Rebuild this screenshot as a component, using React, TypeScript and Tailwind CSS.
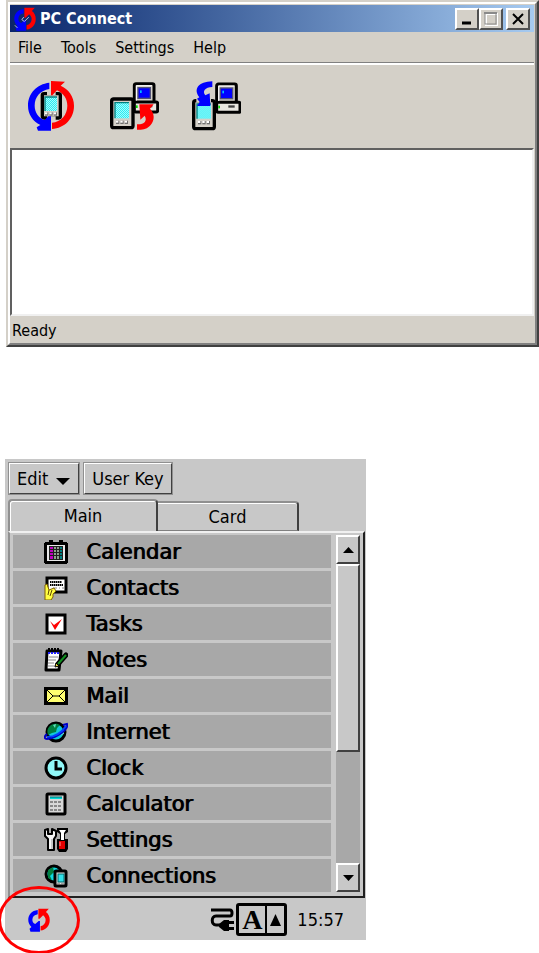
import React, { useState } from 'react';

interface MenuEntry {
  label: string;
  icon: React.ReactNode;
}

// Small two-arrow logo, used in the title bar and in the tray
const SyncIcon: React.FC<{ children?: React.ReactNode }> = ({ children }) => (
  <svg className="size-6 shrink-0" viewBox="80 368 72 76" aria-hidden="true">
    <path d="M112 374 C93 376 82 389 82 405 C82 414 85 421 92 428 L86 434 L89 443 H119 V409 H115 L104 419 C97 415 95 411 95 405 C95 396 101 390 112 388 Z" fill="#0000ff" />
    <path d="M114 370 H147 L138 381 C146 387 150 396 150 406 C150 425 138 438 121 439 V426 C131 424 137 416 137 406 C137 400 134 395 129 391 L118 402 H114 Z" fill="#ff0000" />
    {children}
  </svg>
);

const Screen: React.FC<{ x: number; y: number; w: number; h: number }> = ({ x, y, w, h }) => (
  <>
    <rect x={x} y={y} width={w} height={h} fill="url(#dither)" />
    <path d={`M${x} ${y + h} V${y} H${x + w}`} fill="none" stroke="#008080" strokeWidth="4" />
  </>
);

const Dither: React.FC = () => (
  <defs>
    <pattern id="dither" width="6" height="6" patternUnits="userSpaceOnUse">
      <rect width="6" height="6" fill="#a0ffff" />
      <rect width="3" height="3" fill="#30e8f0" />
      <rect x="3" y="3" width="3" height="3" fill="#30e8f0" />
    </pattern>
  </defs>
);

const Keys: React.FC<{ x: number; y: number }> = ({ x, y }) => (
  <>
    {[0, 13, 26].map((dx) => (
      <g key={dx}>
        <rect x={x + dx} y={y} width="10" height="10" fill="#707070" />
        <rect x={x + dx} y={y} width="7" height="6" fill="#fff" />
      </g>
    ))}
  </>
);

// Desktop computer, drawn with its top left corner at 0,0
const Computer: React.FC = () => (
  <>
    <rect x="4" y="4" width="59" height="60" rx="5" fill="#d4d0c8" stroke="#000" strokeWidth="9" />
    <rect x="4" y="59" width="70" height="30" rx="4" fill="#e8e6e0" stroke="#000" strokeWidth="9" />
    <path d="M10 55 V10 H57" fill="none" stroke="#fff" strokeWidth="3" />
    <rect x="13" y="14" width="41" height="36" fill="#505078" />
    <rect x="17" y="18" width="33" height="28" fill="#0000ff" />
    <rect x="21" y="24" width="5" height="8" fill="#00c0ff" />
    <rect x="9" y="69" width="5" height="8" fill="#00e000" />
    <rect x="39" y="68" width="19" height="7" fill="#404040" />
  </>
);

const SyncDeviceIcon: React.FC = () => (
  <svg className="h-[50px] w-[46px]" viewBox="24 18 138 150" aria-hidden="true">
    <Dither />
    <rect x="67" y="56" width="54" height="73" rx="5" fill="#d4d0c8" stroke="#000" strokeWidth="10" />
    <path d="M81 55 H107 M81 130 H107" stroke="#d4d0c8" strokeWidth="12" />
    <Screen x={75} y={66} w={36} h={42} />
    <Keys x={75} y={112} />
    <path d="M88 23 C50 27 24 56 24 92 C24 118 39 139 61 150 L50 157 L54 167 L93 167 L93 124 L85 124 L74 135 C56 129 44 112 44 92 C44 66 61 46 88 42 Z" fill="#0000ff" />
    <path d="M93 18 L135 20 L122 32 C145 42 162 64 162 92 C162 131 134 159 96 162 L96 143 C123 141 142 119 142 92 C142 72 131 55 111 46 L97 61 L93 61 Z" fill="#ff0000" />
  </svg>
);

const ToPcIcon: React.FC = () => (
  <svg className="h-[49px] w-[49px]" viewBox="27 24 147 147" aria-hidden="true">
    <g transform="translate(96 28)">
      <Computer />
    </g>
    <rect x="32" y="78" width="64" height="86" rx="6" fill="#d4d0c8" stroke="#000" strokeWidth="10" />
    <Screen x={42} y={89} w={42} h={47} />
    <Keys x={45} y={143} />
    <path d="M115 94 L158 94 L147 107 C162 122 161 142 149 156 C138 169 124 171 108 170 L108 154 C130 155 140 143 131 128 L118 140 Z" fill="#ff0000" />
  </svg>
);

const FromPcIcon: React.FC = () => (
  <svg className="h-[50px] w-[49px]" viewBox="35 17 147 150" aria-hidden="true">
    <g transform="translate(105 22)">
      <Computer />
    </g>
    <rect x="40" y="76" width="62" height="84" rx="6" fill="#d4d0c8" stroke="#000" strokeWidth="10" />
    <path d="M48 74 H92" stroke="#d4d0c8" strokeWidth="14" />
    <Screen x={50} y={86} w={42} h={44} />
    <Keys x={53} y={137} />
    <path d="M96 18 L96 35 C74 36 65 47 75 60 L88 54 L90 92 L50 92 L58 80 L50 70 L57 66 C38 42 54 19 96 18 Z" fill="#0000ff" />
  </svg>
);

const CalendarIcon: React.FC = () => (
  <svg className="size-6" viewBox="0 0 24 24" shapeRendering="crispEdges" aria-hidden="true">
    <path d="M1 2 H5 V0 H9 V2 H15 V0 H19 V2 H23 V3 H24 V23 H23 V24 H1 V23 H0 V3 H1 Z" fill="#000" />
    <rect x="3" y="5" width="18" height="16" fill="#e8e8e8" />
    <rect x="5" y="6" width="14" height="14" fill="#202020" />
    <path d="M6 7 H9 V19 H6 Z" fill="#c000c0" />
    <path d="M10 7 H12 V19 H10 Z M13 7 H15 V19 H13 Z" fill="#90a090" />
    <path d="M16 7 H18 V19 H16 Z" fill="#008080" />
    <path d="M5 9 H19 V10 H5 Z M5 12 H19 V13 H5 Z M5 15 H19 V16 H5 Z" fill="#202020" />
  </svg>
);

const ContactsIcon: React.FC = () => (
  <svg className="size-6" viewBox="0 0 24 24" aria-hidden="true">
    <rect x="3" y="2" width="19" height="14" fill="#fff" stroke="#000" strokeWidth="3" />
    <path d="M6 6 H18 M6 9 H19" fill="none" stroke="#000" strokeWidth="2" strokeDasharray="1 1" />
    <path d="M6 6 H18 M6 9 H19" fill="none" stroke="#000" />
    <path d="M9 12 H13 M15 12 H16 M18 12 H20" stroke="#888" />
    <path d="M1 9 L3 8 L5 14 L10 12 L12 15 L9 18 L9 21 L7 24 L1 24 Z" fill="#ffff40" stroke="#806000" />
    <path d="M5 14 L4 19 M8 14 L6 20" stroke="#604800" />
  </svg>
);

const TasksIcon: React.FC = () => (
  <svg className="size-6" viewBox="0 0 24 24" aria-hidden="true">
    <rect x="3" y="3" width="18" height="18" fill="#fff" stroke="#000" strokeWidth="3" />
    <path d="M6 9 L10 13 L18 7 L11 18 Z" fill="#ff0000" />
  </svg>
);

const NotesIcon: React.FC = () => (
  <svg className="size-6" viewBox="0 0 24 24" aria-hidden="true">
    <path d="M3 3 H17 L15 22 H2 Z" fill="#fff" stroke="#000" strokeWidth="3" strokeLinejoin="round" />
    <path d="M5 0 V4 M8 0 V4 M11 0 V4 M14 0 V4" stroke="#000" strokeWidth="2" />
    <path d="M4 5 H15" stroke="#2020ff" strokeWidth="2" strokeDasharray="2 1" />
    <path d="M5 9 H14 M4 12 H12 M4 15 H10 M4 18 H13" stroke="#888" />
    <path d="M22 7 L14 16" stroke="#000" strokeWidth="5" strokeLinecap="round" />
    <path d="M22 7 L14 16" stroke="#109020" strokeWidth="2" />
    <path d="M11 19 L12 15 L15 18 Z" fill="#f0e040" stroke="#000" />
  </svg>
);

const MailIcon: React.FC = () => (
  <svg className="size-6" viewBox="0 0 24 24" aria-hidden="true">
    <rect x="0" y="3" width="24" height="18" fill="#000" />
    <rect x="3" y="6" width="18" height="12" fill="#ffff70" />
    <path d="M3 6 L9 12 H15 L21 6 M3 18 L9 12 M15 12 L21 18" fill="none" stroke="#000" />
  </svg>
);

const InternetIcon: React.FC = () => (
  <svg className="size-6" viewBox="0 0 24 24" aria-hidden="true">
    <circle cx="12" cy="12" r="9" fill="#10c8d8" stroke="#000" strokeWidth="3" />
    <path d="M5 7 C8 3 13 3 16 5 L13 8 L12 12 L8 13 L4 15 C3 12 3 9 5 7 Z" fill="#008040" />
    <path d="M9 5 L12 4 L11 8 Z M17 11 L20 9 V14 L17 15 Z" fill="#60e0c0" />
    <path d="M19 5 L23 4 C25 9 13 18 3 19 C0 19 0 16 3 14" fill="none" stroke="#0000c8" strokeWidth="2" />
    <path d="M3 17 C11 17 18 12 22 6" fill="none" stroke="#0040ff" strokeWidth="2" />
  </svg>
);

const ClockIcon: React.FC = () => (
  <svg className="size-6" viewBox="0 0 24 24" aria-hidden="true">
    <circle cx="12" cy="12" r="10" fill="#90f8f8" stroke="#000" strokeWidth="3" />
    <path d="M12 5 V13 H18" fill="none" stroke="#000" strokeWidth="3" />
  </svg>
);

const CalculatorIcon: React.FC = () => (
  <svg className="size-6" viewBox="0 0 24 24" aria-hidden="true">
    <rect x="3" y="2" width="18" height="20" rx="1" fill="#d8d8d8" stroke="#000" strokeWidth="3" />
    <rect x="6" y="5" width="12" height="2" fill="#00d8d8" />
    <path d="M6 5 H18" stroke="#006868" />
    <path d="M6 10 H18 M6 14 H18 M6 18 H18" stroke="#888" strokeWidth="2" strokeDasharray="3 1" />
  </svg>
);

const SettingsIcon: React.FC = () => (
  <svg className="size-6" viewBox="0 0 24 24" aria-hidden="true">
    <path d="M1 2 L4 1 V6 H8 V1 L12 3 V8 L10 11 V22 L4 22 V11 L1 8 Z" fill="#f4f4f4" stroke="#000" strokeWidth="2" strokeLinejoin="round" />
    <path d="M8 11 V21" stroke="#999" />
    <path d="M13 0 H24 V4 L21 6 V11 H24 V21 L22 24 H15 L13 21 V11 H16 V6 L13 4 Z" fill="#000" />
    <path d="M15 2 H22 L20 5 V12 H17 V5 Z" fill="#fff" />
    <rect x="15" y="13" width="6" height="8" fill="#e00000" />
    <path d="M16 14 V18" stroke="#ff9090" />
  </svg>
);

const ConnectionsIcon: React.FC = () => (
  <svg className="size-6" viewBox="0 0 24 24" aria-hidden="true">
    <circle cx="10" cy="10" r="8" fill="#10d8e0" stroke="#000" strokeWidth="3" />
    <path d="M4 6 L9 3 L10 8 L6 12 L8 16 L4 14 Z" fill="#008040" />
    <rect x="11" y="7" width="11" height="15" rx="1" fill="#e4e4e4" stroke="#000" strokeWidth="3" />
    <rect x="14" y="10" width="6" height="8" fill="#30e0e8" stroke="#006868" />
    <path d="M13 20 H16 M17 20 H20" stroke="#666" />
  </svg>
);

const PlugIcon: React.FC = () => (
  <svg className="size-6" viewBox="0 0 24 24" aria-hidden="true">
    <path d="M1 2 H20 Q22 2 22 5 Q22 8 20 8 H6 C1 8 1 17 6 17 H10" fill="none" stroke="#000" strokeWidth="3" />
    <path d="M9 16 L14 12 H19 V23 H14 L9 19 Z M18 13 H24 V16 H18 Z M18 19 H24 V22 H18 Z" fill="#000" />
  </svg>
);

const entries: MenuEntry[] = [
  { label: 'Calendar', icon: <CalendarIcon /> },
  { label: 'Contacts', icon: <ContactsIcon /> },
  { label: 'Tasks', icon: <TasksIcon /> },
  { label: 'Notes', icon: <NotesIcon /> },
  { label: 'Mail', icon: <MailIcon /> },
  { label: 'Internet', icon: <InternetIcon /> },
  { label: 'Clock', icon: <ClockIcon /> },
  { label: 'Calculator', icon: <CalculatorIcon /> },
  { label: 'Settings', icon: <SettingsIcon /> },
  { label: 'Connections', icon: <ConnectionsIcon /> },
];

const captionButton =
  'flex h-[22px] w-6 items-center justify-center border-2 border-t-white border-l-white border-r-[#505050] border-b-[#505050] bg-[#d4d0c8]';

const PcConnectWindow: React.FC = () => (
  <section className="border-2 border-t-[#d4d0c8] border-l-[#d4d0c8] border-r-[#404040] border-b-[#404040] bg-[#d4d0c8]">
    <div className="border-2 border-t-white border-l-white border-r-[#808080] border-b-[#808080] pt-px pr-px">
      <header className="flex h-[27px] items-center bg-linear-to-r from-[#0a246a] to-[#a6caf0] pr-1 pl-[3px]">
        <SyncIcon>
          <path d="M84 426 L92 434 M106 408 L114 414 L128 400 M106 408 L112 400" fill="none" stroke="#c0c8e0" strokeWidth="3" />
        </SyncIcon>
        <h1 className="ml-[3px] flex-1 text-[16px] leading-5 font-bold text-white">PC Connect</h1>
        <button type="button" className={captionButton} aria-label="Minimize">
          <svg className="h-3 w-3" viewBox="0 0 12 12">
            <path d="M1 10 H10" stroke="#000" strokeWidth="3" />
          </svg>
        </button>
        <button type="button" className={captionButton} aria-label="Maximize" disabled>
          <svg className="size-[14px]" viewBox="0 0 14 14">
            <rect x="2" y="2" width="12" height="12" fill="none" stroke="#fff" strokeWidth="2" />
            <rect x="1" y="1" width="11" height="11" fill="none" stroke="#8a8a8a" />
            <path d="M0 1 H13" stroke="#8a8a8a" strokeWidth="2" />
          </svg>
        </button>
        <button type="button" className={`${captionButton} ml-[3px]`} aria-label="Close">
          <svg className="size-3" viewBox="0 0 12 12">
            <path d="M1 1 L11 11 M11 1 L1 11" stroke="#000" strokeWidth="2" />
          </svg>
        </button>
      </header>

      <nav className="flex h-[30px] items-center gap-[19px] px-2 pt-px text-[16px] leading-5">
        {['File', 'Tools', 'Settings', 'Help'].map((item) => (
          <button key={item} type="button">{item}</button>
        ))}
      </nav>

      <div className="flex h-[86px] items-center gap-8 border-t border-[#808080] px-[18px] shadow-[inset_0_2px_0_#fff]">
        <button type="button" className="w-[50px]" aria-label="Synchronize"><SyncDeviceIcon /></button>
        <button type="button" className="w-[50px]" aria-label="Copy to PC"><ToPcIcon /></button>
        <button type="button" className="w-[50px]" aria-label="Copy to device"><FromPcIcon /></button>
      </div>

      <textarea
        readOnly
        aria-label="Log"
        className="block h-[168px] w-full resize-none border-2 border-t-[#606060] border-l-[#606060] border-r-[#f0f0f0] border-b-[#f0f0f0] bg-white outline-none"
      />
      <p className="px-[2px] pt-[5px] pb-[2px] text-[16px] leading-5">Ready</p>
    </div>
  </section>
);

const deviceButton =
  'h-[33px] border-2 border-t-white border-l-white border-r-[#404040] border-b-[#404040] outline outline-[#909090] -outline-offset-1';

const scrollButton =
  'flex h-[29px] items-center justify-center border-2 border-t-white border-l-white border-r-[#404040] border-b-[#404040] bg-[#c8c8c8]';

const DeviceScreen: React.FC = () => {
  const [tab, setTab] = useState('Main');

  return (
    <section className="w-full max-w-[361px] bg-[#c8c8c8] pt-[3px]">
      <div className="flex gap-[3px] px-[3px] text-[18px] leading-6">
        <button type="button" className={`${deviceButton} flex w-[72px] items-center gap-2 pl-[7px]`}>
          Edit
          <svg className="mt-1 h-2 w-[14px]" viewBox="0 0 14 8">
            <path d="M0 1 H14 L7 8 Z" fill="#000" />
          </svg>
        </button>
        <button type="button" className={`${deviceButton} w-[90px]`}>User Key</button>
      </div>

      <div role="tablist" className="flex items-end px-[3px] pt-1 text-[18px] leading-6">
        {['Main', 'Card'].map((name) => (
          <button
            key={name}
            type="button"
            role="tab"
            aria-selected={tab === name}
            onClick={() => setTab(name)}
            className={
              tab === name
                ? 'h-8 w-[150px] rounded-t-[4px] border-2 border-b-0 border-t-[#909090] border-l-[#909090] border-r-[#404040] shadow-[inset_1px_1px_0_#fff]'
                : 'h-[30px] w-[141px] rounded-tr-[4px] border-t-2 border-r-2 border-b border-t-[#909090] border-r-[#404040] border-b-[#808080] shadow-[inset_0_1px_0_#fff]'
            }
          >
            {name}
          </button>
        ))}
      </div>

      <div className="mr-px ml-[3px] flex gap-[5px] border-2 border-t-[#f0f0f0] border-l-[#909090] border-r-[#202020] border-b-[#202020] pt-[2px] pr-[3px] pb-1 pl-[3px]">
        <ul className="flex flex-1 flex-col gap-[3px]">
          {entries.map((entry) => (
            <li key={entry.label}>
              {/* the device fakes bold by striking the text twice */}
              <button type="button" className="flex h-[33px] w-full items-center gap-[18px] bg-[#a8a8a8] pl-[31px] font-['DejaVu_Sans',sans-serif] text-[21px] leading-6 [text-shadow:1px_0_0_#000]">
                {entry.icon}
                {entry.label}
              </button>
            </li>
          ))}
        </ul>
        <div className="flex w-6 flex-col bg-[#a8a8a8]">
          <button type="button" className={scrollButton} aria-label="Scroll up">
            <svg className="h-[6px] w-[11px]" viewBox="0 0 11 6"><path d="M5.500 0 L11 6 H0 Z" /></svg>
          </button>
          <div className="h-[188px] border-2 border-t-white border-l-white border-r-[#404040] border-b-[#404040] bg-[#c8c8c8]" />
          <button type="button" className={`${scrollButton} mt-auto`} aria-label="Scroll down">
            <svg className="h-[6px] w-[11px]" viewBox="0 0 11 6"><path d="M0 0 H11 L5.500 6 Z" /></svg>
          </button>
        </div>
      </div>

      <footer className="flex h-[42px] items-center px-[22px] pt-px">
        <div className="relative mr-auto">
          <SyncIcon />
          <div className="absolute top-1/2 left-1/2 h-[68px] w-[82px] -translate-x-1/2 -translate-y-1/2 rounded-[50%] border-[3px] border-[#ff0000]" />
        </div>
        <PlugIcon />
        <div className="ml-[2px] flex h-[33px] w-[51px] rounded-[3px] border-[3px] border-black">
          <button type="button" className="flex-1 border-r-2 border-black font-['Liberation_Serif',serif] text-[28px] leading-7 font-bold">A</button>
          <button type="button" className="flex w-[17px] items-center justify-center" aria-label="Input methods">
            <svg className="h-3 w-[11px]" viewBox="0 0 11 12"><path d="M5.500 0 L11 12 H0 Z" /></svg>
          </button>
        </div>
        <time className="ml-[10px] text-[18px] leading-6">15:57</time>
      </footer>
    </section>
  );
};

const App: React.FC = () => (
  <main className="min-h-screen bg-white pb-3 pl-[5px] font-['DejaVu_Sans_Condensed','DejaVu_Sans',sans-serif] text-black">
    <div className="pl-px">
      <PcConnectWindow />
    </div>
    <div className="pt-28">
      <DeviceScreen />
    </div>
  </main>
);

export default App;
